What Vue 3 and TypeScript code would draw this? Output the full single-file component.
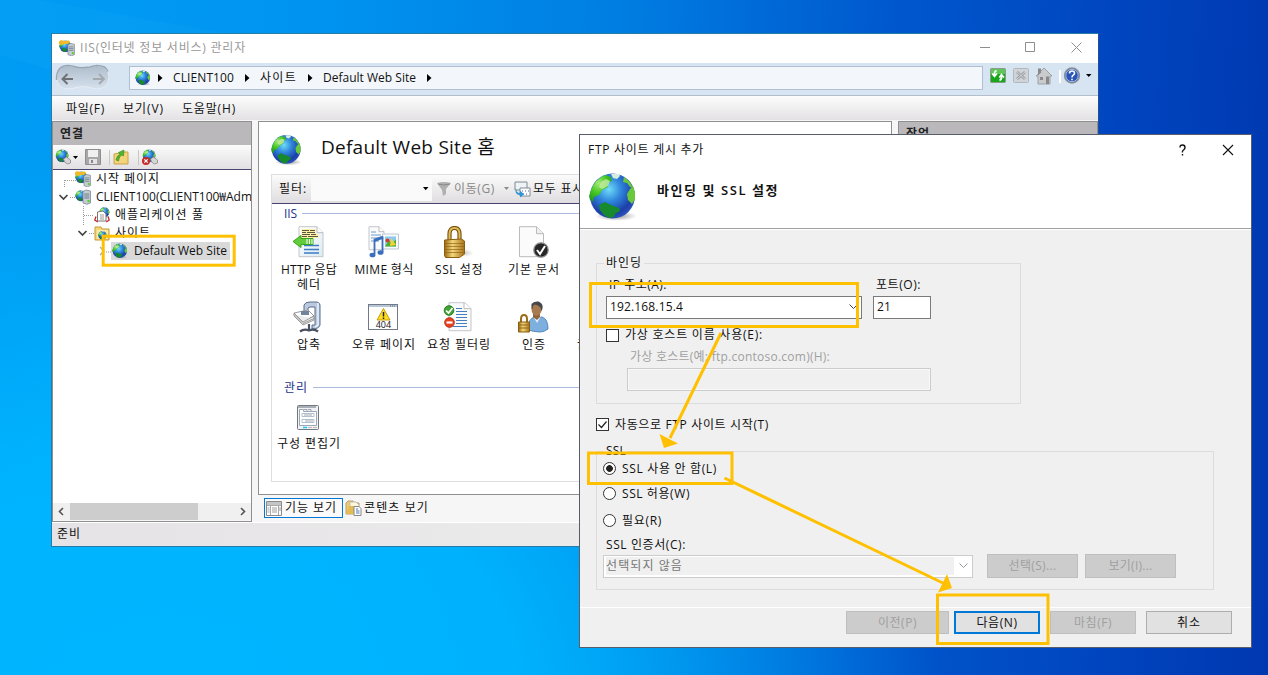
<script setup lang="ts">
import type { Directive } from 'vue'

// Spreads the letters of a label so that it takes exactly the given width.
const vFit: Directive<HTMLElement, number> = {
  mounted(el, binding) {
    const natural = el.getBoundingClientRect().width
    const count = Array.from(el.textContent ?? '').length
    if (count > 0) el.style.letterSpacing = `${(binding.value - natural) / count}px`
  },
}

interface Label { text: string; w: number }
interface Feature { icon: string; lines: Label[] }

const crumbs: Label[] = [
  { text: 'CLIENT100', w: 61 },
  { text: '사이트', w: 37 },
  { text: 'Default Web Site', w: 93 },
]
const menus: Label[] = [
  { text: '파일(F)', w: 39 },
  { text: '보기(V)', w: 41 },
  { text: '도움말(H)', w: 54 },
]
const features: Feature[] = [
  { icon: 'http', lines: [{ text: 'HTTP 응답', w: 56 }, { text: '헤더', w: 24 }] },
  { icon: 'mime', lines: [{ text: 'MIME 형식', w: 59 }] },
  { icon: 'lock', lines: [{ text: 'SSL 설정', w: 48 }] },
  { icon: 'doc', lines: [{ text: '기본 문서', w: 52 }] },
  { icon: 'blank', lines: [] },
  { icon: 'clamp', lines: [{ text: '압축', w: 24 }] },
  { icon: 'error', lines: [{ text: '오류 페이지', w: 64 }] },
  { icon: 'filter', lines: [{ text: '요청 필터링', w: 64 }] },
  { icon: 'auth', lines: [{ text: '인증', w: 24 }] },
  { icon: 'blank', lines: [{ text: '권한 부여', w: 64 }] },
]
</script>

<template>
  <div class="desktop">
    <svg class="wallpaper" width="1268" height="675" viewBox="0 0 1268 675">
      <path d="M0 625L480 550V675H0z" fill="#00b8ff" opacity=".12" />
      <path d="M0 0H40L230 34H51V70L0 55z" fill="#20b4ff" opacity=".12" />
    </svg>
    <svg class="defs" width="0" height="0">
      <defs>
        <radialGradient id="gSea" cx=".42" cy=".35" r=".68">
          <stop offset="0" stop-color="#6fdcf8" /><stop offset=".4" stop-color="#2f86dc" />
          <stop offset=".8" stop-color="#1d3fa8" /><stop offset="1" stop-color="#2c55bd" />
        </radialGradient>
        <radialGradient id="gLand" cx=".42" cy=".3" r=".75" gradientUnits="objectBoundingBox">
          <stop offset="0" stop-color="#a6ec74" /><stop offset=".5" stop-color="#46c722" /><stop offset="1" stop-color="#1e8f24" />
        </radialGradient>
        <linearGradient id="gGold" x1="0" x2="1" y1="0" y2="0">
          <stop offset="0" stop-color="#9a6a10" /><stop offset=".4" stop-color="#f4d67a" /><stop offset="1" stop-color="#a8741a" />
        </linearGradient>
        <linearGradient id="gPage" x1="0" x2="1" y1="0" y2="1">
          <stop offset="0" stop-color="#fff" /><stop offset="1" stop-color="#dcebf4" />
        </linearGradient>
        <linearGradient id="gBlob" x1="0" x2="0" y1="0" y2="1">
          <stop offset="0" stop-color="#aebccb" /><stop offset="1" stop-color="#d6e1ed" />
        </linearGradient>
        <radialGradient id="gShade"><stop offset="0" stop-color="#555" stop-opacity=".7" /><stop offset="1" stop-color="#777" stop-opacity="0" /></radialGradient>
      </defs>
      <symbol id="globe" viewBox="0 0 48 50">
        <ellipse cx="27" cy="44" rx="21" ry="5" fill="url(#gShade)" />
        <circle cx="23.500" cy="24" r="22.500" fill="url(#gSea)" />
        <path d="M2 18Q6 7 16 3l6 2 1 4-4 2v4l-6 3-3 5-5 2-1 5-3-2-1-4z" fill="url(#gLand)" />
        <path d="M12 10l5-3 4 2-2 5-6 3-3-2z" fill="#c4eba4" opacity=".8" />
        <path d="M10 33l6-3 6 3 8 3 1 3-5 3-1 3-5 1-5-3-4-5z" fill="#168a2c" />
        <path d="M35 5l6 5 3 6-3-1-3-4-4-1zM41 17l3-3 2 6v7l-3 5-4-4-1-6z" fill="#69c83c" />
        <path d="M22 2h8l1 2-3 3-4-1z" fill="#d6ecdf" />
      </symbol>
      <symbol id="server" viewBox="0 0 9 15">
        <path d="M1 2l3-1.500 4.500 1v12L5 14.800 1 13.500z" fill="#c4cbd1" stroke="#7d8890" stroke-width=".8" />
        <path d="M2.200 4.500h5M2.200 6.500h5M2.200 8.500h5" stroke="#687983" stroke-width=".9" />
        <rect x="5.500" y="10.500" width="2.200" height="2.200" fill="#54d52b" />
      </symbol>
      <symbol id="iis" viewBox="0 0 16 16">
        <use href="#globe" x="0" y="0" width="13" height="13" />
        <path d="M0 1.500L2 0l3 1 5-.5 1 1.500-2 2H6L3 5 0 4z" fill="#f0b92a" />
        <use href="#server" x="8" y="3" width="8" height="13" />
      </symbol>
      <symbol id="host" viewBox="0 0 16 16">
        <use href="#globe" x="0" y="1" width="12" height="12" />
        <use href="#server" x="7" y="0" width="9" height="16" />
      </symbol>
      <symbol id="pool" viewBox="0 0 16 16">
        <use href="#globe" x="5" y="0" width="11" height="11" />
        <path d="M3.500 5L9 4l3 3v7H3.500z" fill="#fff" stroke="#777" /><path d="M6 8h4M6 10h4M6 12h4" stroke="#999" />
        <path d="M2 9.500L.800 13l3 2M14 9.500l1.200 3.500-3 2" fill="none" stroke="#c8242a" stroke-width="1.300" />
      </symbol>
      <symbol id="sites" viewBox="0 0 16 16">
        <path d="M1 2h6l1 2h7v11H1z" fill="#f5d678" stroke="#c99a32" /><path d="M3 5h11v9H3z" fill="#fbe9a8" />
        <use href="#globe" x="4" y="6" width="9" height="9" />
      </symbol>
      <symbol id="connect" viewBox="0 0 16 16">
        <use href="#globe" x="0" y="0" width="13.500" height="14" />
        <path d="M8 10l3-2 4 3v3l-3 1-3-2z" fill="#d6d6d6" stroke="#888" stroke-width=".8" />
      </symbol>
      <symbol id="save" viewBox="0 0 16 16">
        <path d="M.5.500h15v15h-15z" fill="#a7a7a7" stroke="#8f8f8f" /><path d="M3 1h10v7H3z" fill="#efefef" />
        <path d="M4 10h8v5H4z" fill="#e4e4e4" /><path d="M6 11h2v3H6z" fill="#888" />
      </symbol>
      <symbol id="up" viewBox="0 0 16 16">
        <path d="M1 5l6-1 1-1h7v12H1z" fill="#f4d37a" stroke="#c9a24a" />
        <path d="M3 11Q4 6 7 5.500L5.500 3.500 11 1 10.500 7 9 6Q6 7 5.500 12z" fill="#4fb52c" stroke="#338b1c" stroke-width=".6" />
      </symbol>
      <symbol id="http" viewBox="0 0 32 32">
        <path d="M7 .7h18l6 6v24H7z" fill="url(#gPage)" stroke="#c2c6ca" /><path d="M25 .7v6h6" fill="#fff" stroke="#bbb" />
        <path d="M9.500 3h14v5h3v4h-17z" fill="#fff0a6" />
        <path d="M10 4.500h7m1 0h5M10 6.500h4m1 0h8M10 8.500h8m1 0h5M10 10.500h5m1 0h10" stroke="#4b4534" stroke-width=".9" />
        <path d="M12 19.500h15M12 23.500h15M12 27h15" stroke="#3d7cc4" stroke-width="1.400" />
        <path d="M1 15.500l8-6v3h12v6H9v3z" fill="#62cc3c" stroke="#37a51c" /><path d="M15 13v5M17.500 13v5M20 13v5" stroke="#fff" />
      </symbol>
      <symbol id="mime" viewBox="0 0 32 32">
        <path d="M2 .7h10l5 5v18H2z" fill="#fafafa" stroke="#c2c6ca" /><path d="M12 .7v5h5" fill="#fff" stroke="#bbb" />
        <path d="M4 6h5M4 9h10M4 12h10M4 15h8" stroke="#4c83c3" stroke-width=".8" />
        <path d="M15.500 8h16v15h-16z" fill="#f8fafb" stroke="#bdc9d0" /><path d="M18 10.500h11v10H18z" fill="#8dc9ef" />
        <path d="M18 20.500l4-6 3 3 4-4v7z" fill="#4fae2b" /><circle cx="20.500" cy="14.500" r="2" fill="#d43c28" /><path d="M24 12l5 7-6 1z" fill="#f2d43a" />
        <path d="M7.500 28V14.500l8-3V26" fill="none" stroke="#3b6fbe" stroke-width="1.800" /><path d="M7 14.500l9-3.300" stroke="#3b6fbe" stroke-width="3" />
        <ellipse cx="5.500" cy="29" rx="3" ry="2.300" fill="#3b6fbe" /><ellipse cx="13.500" cy="26.500" rx="3" ry="2.300" fill="#3b6fbe" />
      </symbol>
      <symbol id="lock" viewBox="0 0 32 32">
        <ellipse cx="21" cy="27" rx="11" ry="4" fill="url(#gShade)" opacity=".5" />
        <path d="M7.500 14V8Q7.500 2 12.500 2t5 6v6" fill="none" stroke="#75500c" stroke-width="4.200" />
        <path d="M7.500 14V8Q7.500 2 12.500 2t5 6v6" fill="none" stroke="#e0bb5a" stroke-width="2" />
        <path d="M2.500 14l17-1 3 2v13l-5 3.500H3.500l-1-2z" fill="url(#gGold)" stroke="#8a5e10" />
        <path d="M3 17.500h19M3 20.500h19M3 23.500h19M3 26.500h19" stroke="#936619" stroke-width="1" opacity=".7" />
      </symbol>
      <symbol id="doc" viewBox="0 0 32 32">
        <path d="M2.500 .7h17l7 7v23h-24z" fill="#fbfbfb" stroke="#bbb" /><path d="M19.500 .7v7h7" fill="#eee" stroke="#bbb" />
        <circle cx="24" cy="24" r="7.200" fill="#262626" stroke="#8b8b8b" stroke-width="1.200" /><path d="M20 24l3 4 5-8" fill="none" stroke="#fff" stroke-width="2" />
      </symbol>
      <symbol id="clamp" viewBox="0 0 32 32">
        <path d="M12 10V4q1-3 6-3h7q3 1 3 3v20q-1 4-8 4v-4h3V6h-5l-2 1v5z" fill="#b9c9e0" stroke="#5c6c89" />
        <path d="M26 2v22l-3 2" fill="none" stroke="#e8f0fa" stroke-width="1.500" />
        <path d="M2 12l14-3 6 6-11 6z" fill="#fff" stroke="#999" /><path d="M2 12v3l9 9 11-5v-4l-11 6zM2 13.500l9 9 11-5" fill="#ececec" stroke="#888" stroke-width=".8" />
        <path d="M9 10h8v4H9z" fill="#72839e" /><path d="M17 23v6M8 30.500q4-3 9-1 5-2 9 1" stroke="#485062" stroke-width="2.200" fill="none" />
      </symbol>
      <symbol id="error" viewBox="0 0 32 32">
        <rect x="1.500" y="3.500" width="29" height="25" fill="#fff" stroke="#707b87" /><path d="M2 4h28v2H2z" fill="#b6c6d6" /><path d="M23 5h1m1 0h1m1 0h1" stroke="#5a6a7c" />
        <path d="M16.500 7.500l6.500 11.500H10z" fill="#ffdd20" stroke="#c59d13" /><path d="M16.500 11v4.500M16.500 16.500v1.500" stroke="#222" stroke-width="1.500" />
        <text x="16.400" y="26.800" text-anchor="middle" font-family="Open Sans, sans-serif" font-size="9" fill="#111">404</text>
      </symbol>
      <symbol id="filter" viewBox="0 0 32 32">
        <path d="M7 1.700h16l6 6v22H7z" fill="#fafafa" stroke="#c2c6ca" /><path d="M22 1.700v6h7" fill="#fff" stroke="#bbb" />
        <path d="M14 7.500h6M14 10.500h11M14 13.500h11M14 16.500h11M14 19.500h11M14 22.500h11M11 25.500h14" stroke="#457fc1" />
        <circle cx="7" cy="9.500" r="4.800" fill="#42a336" stroke="#2a7c22" /><path d="M4 9.500l2.500 2.500 4-5" fill="none" stroke="#fff" stroke-width="1.700" />
        <circle cx="7.500" cy="21.500" r="4.800" fill="#e64120" stroke="#ba2b12" /><path d="M4.500 21.500h6" stroke="#fff" stroke-width="2.200" />
      </symbol>
      <symbol id="auth" viewBox="0 0 32 32">
        <path d="M11 29q0-12 7-13h7q6 2 6 12-4 3-8 3t-12-2z" fill="#7eb0df" stroke="#5188bd" /><path d="M16 15l4 7 4-7z" fill="#e8f2fa" />
        <path d="M16 12h7v4l-3 3-4-3z" fill="#91643c" /><ellipse cx="19.500" cy="8" rx="5" ry="6.800" fill="#a87a50" /><path d="M14.500 8V3q2-3 7-2.500 5 2 4 7l-1 3-1-4q-3-3-6-3-2 1-2 4z" fill="#46474a" />
        <path d="M4 22v-4q0-4 3-4t3 4v4" fill="none" stroke="#9a6d1b" stroke-width="2" /><path d="M1.500 21h11v10h-11z" fill="url(#gGold)" stroke="#8a5e10" /><path d="M2 24h10M2 27h10" stroke="#936619" />
      </symbol>
      <symbol id="blank" viewBox="0 0 32 32" />
    </svg>

    <section class="iis">
      <header class="titlebar">
        <svg class="i16"><use href="#iis" /></svg>
        <span v-fit="166" class="caption">IIS(인터넷 정보 서비스) 관리자</span>
        <svg class="controls" width="138" height="29" viewBox="0 0 138 29" fill="none" stroke="#8e8e8e">
          <path d="M18 14.500h10M109.500 9.500l10 10M119.500 9.500l-10 10" /><path d="M63.500 9.500h9v9h-9z" />
        </svg>
      </header>
      <div class="nav">
        <svg class="blob" width="56" height="28" viewBox="0 0 56 28">
          <path d="M1.500 13Q2 1.500 13 1.500q4 0 8 1.500t14 0q4-1.500 7-1.500 11 0 12 11.500-1 12-12 12-4 0-7-1.500-7-2-14 0-4 1.500-8 1.500-11 0-11.500-12z" fill="url(#gBlob)" stroke="#e6edf5" />
          <path d="M1.500 16Q1 1.500 13 1.500q4 0 8 1.500t14 0q4-1.500 7-1.500 9 0 11 6" fill="none" stroke="#98a6b5" stroke-width="1.400" />
          <path d="M18 15H7.500m5-5l-5 5 5 5" fill="none" stroke="#6e7277" stroke-width="2" /><path d="M38 15h11m-5-5l5 5-5 5" fill="none" stroke="#a4a9ae" stroke-width="1.800" />
        </svg>
        <div class="address">
          <svg class="i16 site"><use href="#globe" /></svg>
          <svg class="arrow" viewBox="0 0 5 8"><path d="M0 0l4.500 4L0 8z" /></svg>
          <template v-for="c in crumbs" :key="c.text">
            <span v-fit="c.w">{{ c.text }}</span>
            <svg class="arrow" viewBox="0 0 5 8"><path d="M0 0l4.500 4L0 8z" /></svg>
          </template>
        </div>
        <svg class="navtools" width="108" height="18" viewBox="0 0 108 18">
          <rect x=".5" y="1.500" width="15" height="14" rx="1" fill="#16a81a" stroke="#8b9a8c" /><path d="M1 2h14v5H1z" fill="#5cc656" />
          <path d="M6.500 3.500Q4 4.500 4.500 8M2.200 6.500l2.300 3 2.500-3M9.500 13.500q2.500-1 2-4.500M9.300 10.500l2.200-3 2.500 3" stroke="#fff" stroke-width="1.600" fill="none" />
          <rect x="23.500" y="1.500" width="15" height="14" rx="1" fill="#d0d4d8" stroke="#b3b8bd" /><path d="M27 5l8 7M35 5l-8 7" stroke="#9da2a7" stroke-width="2.800" /><path d="M27 5l8 7M35 5l-8 7" stroke="#dadde0" stroke-width=".8" />
          <path d="M46 9l8-8 8 8h-2v8H48V9z" fill="#c9cbcd" stroke="#9ea2a5" /><path d="M48 1.500h3v4l-3 3z" fill="#888" /><path d="M50 10h3v3h-3zM56 9.500h3V17h-3z" fill="#888" />
          <path d="M70 3v13" stroke="#fff" stroke-width="2" />
          <circle cx="82" cy="8.500" r="7.500" fill="#2a56b8" stroke="#8b9096" stroke-width="1.300" /><circle cx="82" cy="8.500" r="6.200" fill="none" stroke="#c5d3ea" stroke-width=".8" />
          <path d="M79.500 6.500q0-2.500 2.500-2.500t2.500 2.200q0 1.300-1.500 2.200-1 .6-1 2M82 11.700v1.600" stroke="#fff" stroke-width="1.600" fill="none" />
          <path d="M96 7h5.500l-2.700 3z" />
        </svg>
      </div>
      <nav class="menubar"><span v-for="m in menus" :key="m.text" v-fit="m.w">{{ m.text }}</span></nav>
      <div class="workspace">
        <aside class="connections">
          <h2><span v-fit="24">연결</span></h2>
          <div class="tools">
            <svg width="106" height="18" viewBox="0 0 106 18">
              <use href="#connect" x="1" y="1" width="17" height="16" /><path d="M19 8h5l-2.500 3z" />
              <use href="#save" x="31" y="1" width="16" height="16" /><path d="M55.500 2v15M84.500 2v15" stroke="#c8c8be" />
              <use href="#up" x="59" y="1" width="16" height="16" /><use href="#connect" x="88" y="1" width="17" height="16" />
              <circle cx="92" cy="13" r="4" fill="#c72b2b" /><path d="M90.300 11.300l3.400 3.400M93.700 11.300l-3.400 3.400" stroke="#fff" stroke-width="1.200" />
            </svg>
          </div>
          <div class="tree">
            <svg class="lines" width="60" height="96" viewBox="0 0 60 96" fill="none">
              <path d="M11.500 11V19M12 11.500h11M17 28.500h5M30.500 37v20M31 46.500h10M36 64.500h5M53 83h6" stroke="#999" stroke-dasharray="1 1" />
              <path d="M6.500 26l4 4 4-4M25.500 62l4 4 4-4" stroke="#444" stroke-width="1.700" /><path d="M47 78l4 4-4 4" stroke="#aaa" stroke-width="1.400" />
            </svg>
            <div class="node d0"><svg class="i16"><use href="#iis" /></svg><span v-fit="64">시작 페이지</span></div>
            <div class="node d0"><svg class="i16"><use href="#host" /></svg><span v-fit="156">CLIENT100(CLIENT100₩Adm</span></div>
            <div class="node d1"><svg class="i16"><use href="#pool" /></svg><span v-fit="89">애플리케이션 풀</span></div>
            <div class="node d1"><svg class="i16"><use href="#sites" /></svg><span v-fit="36">사이트</span></div>
            <div class="node d2"><svg class="i16"><use href="#globe" /></svg><span v-fit="93">Default Web Site</span></div>
          </div>
          <div class="scroll">
            <svg width="17" height="17" viewBox="0 0 17 17" fill="none" stroke="#555" stroke-width="1.600"><path d="M10 5L6.500 8.500 10 12" /></svg>
            <i />
            <svg width="17" height="17" viewBox="0 0 17 17" fill="none" stroke="#555" stroke-width="1.600"><path d="M7 5l3.500 3.500L7 12" /></svg>
          </div>
        </aside>
        <main class="center">
          <div class="home">
            <div class="heading"><svg width="31" height="32"><use href="#globe" /></svg><h1 v-fit="174">Default Web Site 홈</h1></div>
            <div class="content">
              <div class="filterbar">
                <span v-fit="28">필터:</span>
                <div class="combo"><svg width="6" height="4"><path d="M0 0h5.500L2.700 3.300z" /></svg></div>
                <svg class="funnel" width="16" height="16" viewBox="0 0 16 16"><path d="M1 2q7-2 14 0l-5 6v5l-3 2-1-6z" fill="#b0b0b0" /><path d="M2 3q5 2 12 0" stroke="#888" fill="none" /></svg>
                <span v-fit="41" class="off">이동(G)</span>
                <svg class="drop" width="6" height="4"><path d="M0 0h5L2.500 3z" fill="#8a8a8a" /></svg>
                <svg width="17" height="17" viewBox="0 0 17 17"><path d="M1 1h12v8H1z" fill="#eef3f7" stroke="#7e8a93" /><path d="M6 7h10v8H6z" fill="#fff" stroke="#7e8a93" /><path d="M8 10h1m2 0h1m2 0h1M9 13h1m2 0h1" stroke="#555eaa" /><path d="M2 7q0 5 4 5v-2.500l4 3.700-4 3.300V14Q0 14 2 7z" fill="#2c97d8" /></svg>
                <span v-fit="68" class="all">모두 표시(A)</span>
              </div>
              <div class="group"><span v-fit="13">IIS</span><hr></div>
              <div class="grid">
                <div v-for="(f, n) in features" :key="n" class="feature">
                  <svg width="32" height="32"><use :href="'#' + f.icon" /></svg>
                  <div v-for="l in f.lines" :key="l.text"><span v-fit="l.w">{{ l.text }}</span></div>
                </div>
              </div>
              <div class="group"><span v-fit="24">관리</span><hr></div>
              <div class="config">
                <svg width="22" height="26" viewBox="0 0 22 26" fill="none"><rect x=".5" y=".5" width="21" height="24" rx="1" fill="#f1f2f4" stroke="#737780" /><path d="M1 2h18" stroke="#aab0b8" stroke-width="2" /><path d="M2.500 4.500h4v2h13v14h-17z" fill="#fff" stroke="#9da7b5" /><path d="M7 4.500h3v1.500M11 4.500h3v1.500" stroke="#9da7b5" /><path d="M5 8.500h12v3H5zM5 14.500h12v3H5z" stroke="#b3c1ce" /><path d="M7 10h8M8 16h8" stroke="#a0a6ae" /><path d="M6 22.500h4" stroke="#1fc4f4" stroke-width="1.500" /><path d="M11 22.500h4M16 22.500h4" stroke="#bbb" /></svg>
                <span v-fit="64">구성 편집기</span>
              </div>
            </div>
          </div>
          <div class="views">
            <div class="view on">
              <svg width="16" height="15" viewBox="0 0 16 15"><path d="M.5.500h15v14H.5z" fill="#fff" stroke="#8a8a8a" /><path d="M1 1h14v3H1z" fill="#c5c5c5" /><path d="M1 4.500h14M4.500 4v10M12.500 4v10" stroke="#aaa" /><path d="M1.500 7h2M1.500 9h2M1.500 11h2M6 7h5M6 9h5M6 11h5M13 7h2M13 9h2" stroke="#888" stroke-width=".8" /></svg>
              <span v-fit="52">기능 보기</span>
            </div>
            <div class="view">
              <svg width="17" height="16" viewBox="0 0 17 16"><path d="M1 3l2-2h5l1 2h5v11H1z" fill="#eccb72" stroke="#b9a060" /><path d="M5 2h6l3 3v8H5z" fill="#fff8dc" stroke="#bbb" /><path d="M1 14L4 6h6v8z" fill="#e5bb55" /><path d="M9 6.500h5l2 2v7H9z" fill="#fff" stroke="#888" /><path d="M11 9h2M11 11h3.500M11 13h3.500" stroke="#4b77b5" /></svg>
              <span v-fit="65">콘텐츠 보기</span>
            </div>
          </div>
        </main>
        <aside class="actions"><h2><span v-fit="24">작업</span></h2></aside>
      </div>
      <footer><span v-fit="24">준비</span></footer>
    </section>

    <section class="dialog">
      <header>
        <div class="dtitle">
          <span v-fit="116">FTP 사이트 게시 추가</span>
          <svg width="60" height="14" viewBox="0 0 60 14" fill="none" stroke="#111"><path d="M4 4.500Q4 2 6.500 2T9 4.500Q9 6 7.500 7T6.500 9.500M6.500 11v1.500" stroke-width="1.400" /><path d="M47 2l10 10M57 2L47 12" stroke-width="1.100" /></svg>
        </div>
        <div class="banner"><svg width="48" height="50"><use href="#globe" /></svg><h3 v-fit="122">바인딩 및 SSL 설정</h3></div>
      </header>
      <div class="form">
        <fieldset class="binding">
          <legend v-fit="40">바인딩</legend>
          <div class="pair">
            <label><span v-fit="58">IP 주소(A):</span>
              <div class="field ip"><span v-fit="73">192.168.15.4</span><svg width="9" height="6" viewBox="0 0 9 6"><path d="M.5.500l4 4 4-4" /></svg></div>
            </label>
            <label><span v-fit="45">포트(O):</span><div class="field port"><span v-fit="14">21</span></div></label>
          </div>
          <div class="check vhost"><i class="box" /><span v-fit="138">가상 호스트 이름 사용(E):</span></div>
          <div class="hostname"><span v-fit="200">가상 호스트(예: ftp.contoso.com)(H):</span><div class="field" /></div>
        </fieldset>
        <div class="check auto"><i class="box"><svg width="11" height="11" viewBox="0 0 11 11"><path d="M1.500 5.500l3 3 5-6" fill="none" stroke="#222" stroke-width="1.200" /></svg></i><span v-fit="154">자동으로 FTP 사이트 시작(T)</span></div>
        <fieldset class="ssl">
          <legend v-fit="24">SSL</legend>
          <div class="check r1"><i class="radio picked" /><span v-fit="95">SSL 사용 안 함(L)</span></div>
          <div class="check r2"><i class="radio" /><span v-fit="68">SSL 허용(W)</span></div>
          <div class="check r3"><i class="radio" /><span v-fit="40">필요(R)</span></div>
          <div class="certlabel"><span v-fit="80">SSL 인증서(C):</span></div>
          <div class="cert">
            <div class="select"><div><span v-fit="77">선택되지 않음</span></div><svg width="9" height="6" viewBox="0 0 9 6"><path d="M.5.500l4 4 4-4" /></svg></div>
            <button disabled><span v-fit="48">선택(S)...</span></button>
            <button disabled><span v-fit="44">보기(I)...</span></button>
          </div>
        </fieldset>
      </div>
      <div class="buttons">
        <button class="prev" disabled><span v-fit="39">이전(P)</span></button>
        <button class="next"><span v-fit="41">다음(N)</span></button>
        <button disabled><span v-fit="38">마침(F)</span></button>
        <button><span v-fit="24">취소</span></button>
      </div>
    </section>

    <svg class="callouts" width="1268" height="675" viewBox="0 0 1268 675">
      <g fill="none" stroke="#ffc000" stroke-width="3">
        <rect x="103.200" y="236.200" width="131" height="29" /><rect x="590.500" y="283.500" width="267" height="43" />
        <rect x="588.500" y="453" width="143.500" height="30.500" /><rect x="937.500" y="595" width="110.500" height="48.500" />
        <path d="M721 333L670 438M724.500 478L945 584" />
      </g>
      <path d="M659.500 434l18.500 9.500-14 4.500zM947 574l5 14-14 4.500z" fill="#ffc000" />
    </svg>
  </div>
</template>

<style>
html, body { margin: 0; overflow: hidden; }
</style>
<style scoped>
* { box-sizing: border-box; }
.desktop { position: relative; width: 1268px; height: 675px; overflow: hidden; font: 12px/16px "Open Sans", "Noto Sans CJK KR", sans-serif; color: #111; white-space: nowrap;
  background: radial-gradient(ellipse 760px 560px at 180px 700px, #00b6ff 0, rgba(0,182,255,.9) 45%, rgba(0,176,252,.4) 75%, rgba(0,170,250,0) 100%), linear-gradient(92deg, #009cf4 0, #0094f0 24%, #007ee2 48%, #0058ce 69%, #0046c0 86%, #0038b0 100%); }
.wallpaper { position: absolute; left: 0; top: 0; }
.defs { position: absolute; }
svg { display: block; flex: none; }
span, h1, h3 { display: inline-block; flex: none; }
h1, h2, h3 { margin: 0; font-weight: 400; }
.i16 { width: 16px; height: 16px; }
.iis { position: absolute; left: 51px; top: 33px; width: 1048px; height: 514px; border: 1px solid #277ba9; border-right-color: #224f95; background: #f6f6f6; display: flex; flex-direction: column; overflow: hidden; }
.titlebar { height: 29px; background: #fff; display: flex; align-items: center; padding: 0 0 2px 7px; }
.caption { color: #999; margin-left: 5px; }
.controls { margin-left: auto; margin-right: -2px; }
.nav { height: 33px; background: #d7e4f2; border-bottom: 1px solid #b3becb; display: flex; padding: 3px 0 0 3px; }
.blob { margin-top: -2px; }
.address { width: 854px; height: 24px; margin-left: 18px; border: 1px solid #b1bfd2; background: #f3f7fb; display: flex; align-items: center; padding-left: 5px; }
.site { margin-right: -4px; }
.address span { transform: none; }
.arrow { width: 5px; height: 8px; margin: 0 10px 0 11px; }
.navtools { margin: 1px 0 0 7px; }
.menubar { height: 24px; background: linear-gradient(#fdfdfd, #e3e1e3); display: flex; align-items: center; gap: 18px; padding: 1px 0 0 14px; }
.workspace { height: 402px; padding-top: 1px; display: flex; gap: 6px; flex: none; }
.connections { width: 200px; height: 401px; border: 1px solid #8f8f8f; display: flex; flex-direction: column; overflow: hidden; flex: none; }
h2 { height: 23px; background: #bab8ba; font-size: 12px; line-height: 23px; font-weight: 700; padding-left: 7px; color: #222; }
.tools { height: 25px; border-bottom: 1px solid #49456f; background: linear-gradient(#fbfbfb, #e2e0e2); padding: 3px 0 0 1px; }
.tree { position: relative; height: 333px; background: #fff; }
.lines { position: absolute; left: 0; top: -1px; }
.node { height: 18px; display: flex; align-items: center; }
.node span { margin-left: 5px; line-height: 18px; }
.d0 { padding-left: 22px; } .d1 { padding-left: 41px; }
.d2 { width: 119px; margin-left: 58px; padding-left: 1px; background: #d9d9d9; height: 18px; }
.d2 span { margin-left: 6px; }
.scroll { height: 17px; background: #f0f0f0; display: flex; }
.scroll i { width: 128px; background: #cdcdcd; margin-right: 36px; }
.center { width: 634px; flex: none; }
.home { height: 374px; border: 1px solid #8f8f8f; background: #fff; padding: 12px 12px; }
.heading { display: flex; height: 40px; }
h1 { font-size: 19px; line-height: 27px; margin-left: 19px; }
.content { height: 308px; border: 1px solid #dedede; }
.filterbar { height: 29px; border-bottom: 1px solid #47436d; background: linear-gradient(#fbfbfb, #dfdddf); display: flex; align-items: center; padding-left: 7px; }
.combo { width: 121px; height: 23px; margin: 0 4px 0 4px; background: #fafafa; display: flex; align-items: center; justify-content: flex-end; padding-right: 3px; }
.off { color: #888; margin-left: 2px; }
.drop { margin: 0 4px 0 9px; }
.all { margin-left: 2px; }
.group { display: flex; align-items: center; height: 19px; color: #1e3287; padding-left: 12px; }
.group hr { flex: 1; height: 1px; border: 0; margin: 0 8px 0 5px; background: #adb9df; }
.grid { display: grid; grid-template-columns: repeat(5, 75px); grid-auto-rows: 75px; margin-top: 3px; height: 153px; }
.feature { display: flex; flex-direction: column; align-items: center; line-height: 15px; }
.feature svg { margin: 0 3px 4px 0; }
.feature div { margin-right: 1px; }
.grid + .group { margin-top: -1px; }
.config { width: 74px; display: flex; flex-direction: column; align-items: center; margin-top: 8px; gap: 5px; }
.config svg { margin-right: 2px; }
.views { display: flex; padding: 3px 0 0 6px; }
.view { height: 20px; display: flex; align-items: center; gap: 2px; padding: 0 1px; border: 1px solid transparent; line-height: 18px; }
.view.on { width: 79px; border-color: #0078d7; background: #fafafa; gap: 3px; }
.actions { width: 200px; border: 1px solid #8f8f8f; background: #fff; flex: none; }
footer { height: 24px; border-top: 1px solid #fff; background: linear-gradient(90deg, #e5e3e5, #f2f2f2); padding: 3px 0 0 5px; }
.dialog { position: absolute; left: 579px; top: 134px; width: 673px; height: 514px; border: 1px solid #555e6a; background: #f0f0f0; }
.dialog header { height: 95px; background: #fff; border-bottom: 1px solid #fff; box-shadow: inset 0 -1px #a0a0a0; }
.dtitle { height: 29px; display: flex; align-items: center; justify-content: space-between; padding: 0 15px 0 8px; }
.banner { display: flex; padding: 8px 0 0 9px; }
h3 { font-size: 13px; line-height: 18px; font-weight: 600; margin: 9px 0 0 20px; }
.form { padding: 33px 0 0 16px; height: 377px; }
fieldset { margin: 0; border: 1px solid #dcdcdc; padding: 0; min-width: 0; }
legend { padding: 0 2px; position: absolute; left: 7px; top: -9px; background: #f0f0f0; line-height: 16px; }
.binding { position: relative; width: 425px; height: 141px; padding: 13px 0 0 9px; }
.pair { display: flex; gap: 11px; }
label { display: block; }
label > span { margin-left: 3px; line-height: 16px; height: 17px; vertical-align: top; }
.field { height: 24px; border: 1px solid #7a7a7a; background: #fff; display: flex; align-items: center; justify-content: space-between; padding: 0 3px; margin-top: 1px; }
.pair .field { margin-top: 2px; height: 23px; padding-bottom: 1px; }
.ip { width: 256px; } .port { width: 58px; }
.field svg, .select svg { fill: none; stroke: #444; }
.check { display: flex; align-items: center; height: 16px; }
.check span { margin-left: 6px; }
.box { width: 13px; height: 13px; border: 1px solid #333; background: #fff; flex: none; }
.radio { width: 13px; height: 13px; border: 1px solid #333; border-radius: 50%; background: #fff; flex: none; margin-top: -1px; }
.picked { background: radial-gradient(circle, #222 0 3px, #fff 3.7px); }
.vhost { margin-top: 8px; }
.hostname { margin: 6px 0 0 21px; color: #a0a0a0; }
.hostname span { margin-left: 3px; display: block; width: fit-content; }
.hostname .field { width: 304px; height: 23px; margin-top: 3px; border-color: #ccc; box-shadow: inset 0 0 0 1px #f8f8f8; background: #f0f0f0; }
.auto { margin: 13px 0 18px; }
.auto .box { margin-top: -2px; }
.ssl { position: relative; width: 618px; height: 139px; padding: 9px 0 0 6px; }
.r2 { margin-top: 9px; } .r3 { margin-top: 11px; }
.certlabel { margin: 8px 0 0 3px; height: 16px; }
.cert { display: flex; align-items: center; margin-top: 1px; }
.select { width: 370px; height: 23px; border: 1px solid #ccc; background: #fff; display: flex; align-items: center; padding: 1px 4px 1px 2px; justify-content: space-between; color: #777; margin-right: 14px; }
.select div { width: 348px; height: 18px; line-height: 18px; background: #f0f0f0; }
.select svg { stroke: #999; }
button { font: inherit; color: #111; padding: 0; height: 23px; width: 86px; border: 1px solid #adadad; background: #e1e1e1; display: block; }
button:disabled { border-color: #bfbfbf; background: #ccc; color: #a0a0a0; }
.cert button { width: 91px; height: 24px; margin-right: 7px; }
.buttons { height: 41px; border-top: 1px solid #fff; display: flex; justify-content: flex-end; padding: 3px 19px 0 0; gap: 10px; }
.buttons .prev { width: 103px; margin-right: -5px; }
.buttons .next { border: 2px solid #0078d7; }
.callouts { position: absolute; left: 0; top: 0; }
</style>
